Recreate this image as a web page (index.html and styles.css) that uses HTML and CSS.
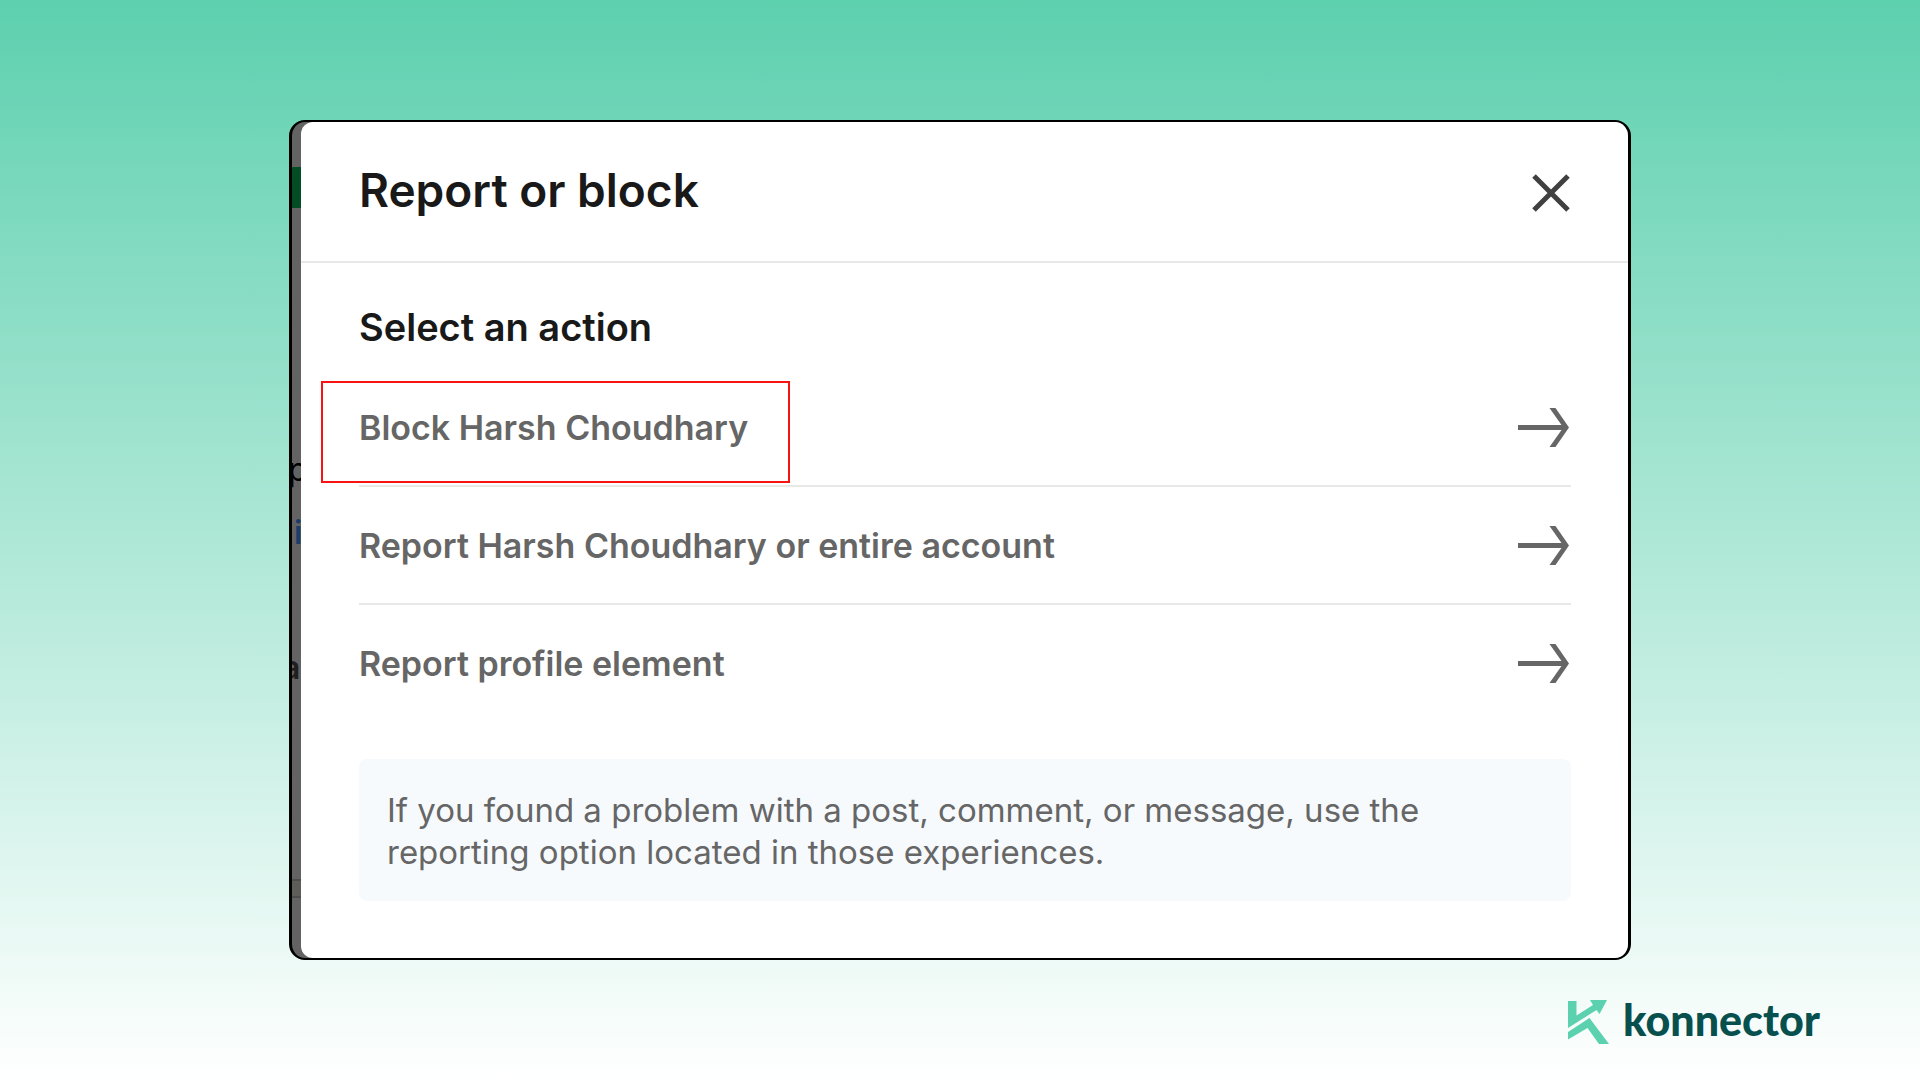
FILE: index.html
```html
<!DOCTYPE html>
<html lang="en">
<head>
    <meta charset="UTF-8">
    <meta name="viewport" content="width=device-width, initial-scale=1.0">
    <title>Report or block</title>
    <link rel="stylesheet" href="styles.css">
</head>
<body>
    <main class="card">
        <!-- dimmed page behind the modal -->
        <div class="backdrop" aria-hidden="true">
            <div class="backdrop-green"></div>
            <span class="letter letter-p">p</span>
            <span class="letter letter-i">i</span>
            <span class="letter letter-a">a</span>
            <div class="backdrop-line"></div>
        </div>
        <section class="modal" role="dialog" aria-labelledby="modalTitle">
            <header class="modal-header">
                <h1 id="modalTitle">Report or block</h1>
                <button type="button" class="close" aria-label="Close">
                    <svg width="38" height="38" viewBox="0 0 38 38"><path d="M2 2L36 36M36 2L2 36" stroke="#404040" stroke-width="5" fill="none"/></svg>
                </button>
            </header>
            <div class="modal-body">
                <h2>Select an action</h2>
                <ul class="actions">
                    <li>
                        <button type="button" class="action">
                            <span class="highlight">Block Harsh Choudhary</span>
                            <svg class="arrow" width="51" height="39" viewBox="0 0 51 39"><path d="M0 17H43.500L31.500 0H37.500L51 19.500L37.500 39H31.500L43.500 22H0Z" fill="#666"/></svg>
                        </button>
                    </li>
                    <li>
                        <button type="button" class="action">
                            <span>Report Harsh Choudhary or entire account</span>
                            <svg class="arrow" width="51" height="39" viewBox="0 0 51 39"><path d="M0 17H43.500L31.500 0H37.500L51 19.500L37.500 39H31.500L43.500 22H0Z" fill="#666"/></svg>
                        </button>
                    </li>
                    <li>
                        <button type="button" class="action">
                            <span>Report profile element</span>
                            <svg class="arrow" width="51" height="39" viewBox="0 0 51 39"><path d="M0 17H43.500L31.500 0H37.500L51 19.500L37.500 39H31.500L43.500 22H0Z" fill="#666"/></svg>
                        </button>
                    </li>
                </ul>
                <p class="note">If you found a problem with a post, comment, or message, use the reporting option located in those experiences.</p>
            </div>
        </section>
    </main>
    <footer class="brand">
        <svg width="41" height="44" viewBox="0 0 41 44" fill="#5bd1af">
            <path d="M0 1H8.500V15.500L25 5L22 0H39L31.500 14L28.500 10L0 28Z"/>
            <path d="M0 32L21.500 18L41 44H31L19.500 28L0 39.500Z"/>
        </svg>
        <span class="brand-name">konnector</span>
    </footer>
</body>
</html>
```

FILE: styles.css
```css
* {
    box-sizing: border-box;
}
body {
    margin: 0;
    min-height: 100vh;
    padding: 120px 100px 0;
    background: linear-gradient(#5dd0ae, #ffffff);
    font-family: Inter, "Liberation Sans", sans-serif;
}
h1, h2, p, ul {
    margin: 0;
    padding: 0;
}
button {
    border: none;
    background: none;
    padding: 0;
    font: inherit;
    color: inherit;
    cursor: pointer;
}
svg {
    display: block;
    flex-shrink: 0;
}
.card {
    display: flex;
    max-width: 1342px;
    margin: 0 auto;
    border: 3px solid #000;
    border-top-width: 2px;
    border-bottom-width: 2px;
    border-radius: 16px;
    background: #636363;
    overflow: hidden;
}

/* Sliver of the page behind the modal */
.backdrop {
    width: 9px;
    overflow: hidden;
}
.backdrop-green {
    height: 41px;
    margin-top: 45px;
    background: #024d24;
}
.letter {
    display: block;
    font-size: 32px;
    line-height: 40px;
}
.letter-p {
    margin: 242px 0 0 -4px;
    color: #000;
}
.letter-i {
    margin: 23px 0 0 2px;
    font-weight: 600;
    color: #1c3d68;
}
.letter-a {
    margin: 95px 0 0 -10px;
    font-weight: 600;
    color: #1f1f1f;
}
.backdrop-line {
    height: 19px;
    margin-top: 191px;
    border: solid #4d4d4d;
    border-width: 2px 0;
    background: #5f5d59;
}

.modal {
    flex: 1;
    background: #fff;
    border-radius: 12px 0 0 12px;
}
.modal-header {
    display: flex;
    justify-content: space-between;
    align-items: flex-start;
    height: 141px;
    padding: 44px 58px 0;
    border-bottom: 2px solid #e8e8e8;
}
.close {
    padding-top: 8px;
}
h1 {
    font-size: 46px;
    line-height: 48px;
    font-weight: 600;
    color: #191919;
}
.modal-body {
    padding: 40px 57px 57px 58px;
}
h2 {
    font-size: 38px;
    line-height: 48px;
    font-weight: 600;
    color: #191919;
}
.actions {
    margin-top: 18px;
    list-style: none;
}
.actions li + li {
    border-top: 2px solid #e8e8e8;
}
.action {
    display: flex;
    justify-content: space-between;
    align-items: center;
    width: 100%;
    height: 116px;
    padding-right: 2px;
    font-size: 34px;
    line-height: 42px;
    font-weight: 600;
    text-align: left;
    color: #666;
}
.action span {
    padding-top: 2px;
}
.highlight {
    position: relative;
}
.highlight::after {
    content: "";
    position: absolute;
    inset: -24px -42px -34px -38px;
    border: 2px solid #f91414;
}
.note {
    margin-top: 38px;
    padding: 30px 28px 28px;
    border-radius: 8px;
    background: #f6fafd;
    font-size: 33px;
    line-height: 42px;
    color: #666;
}

.brand {
    display: flex;
    justify-content: flex-end;
    gap: 14px;
    margin-top: 40px;
    height: 44px;
}
.brand-name {
    font-family: Lato, sans-serif;
    font-size: 43px;
    line-height: 40px;
    font-weight: 900;
    color: #07504e;
}
```
